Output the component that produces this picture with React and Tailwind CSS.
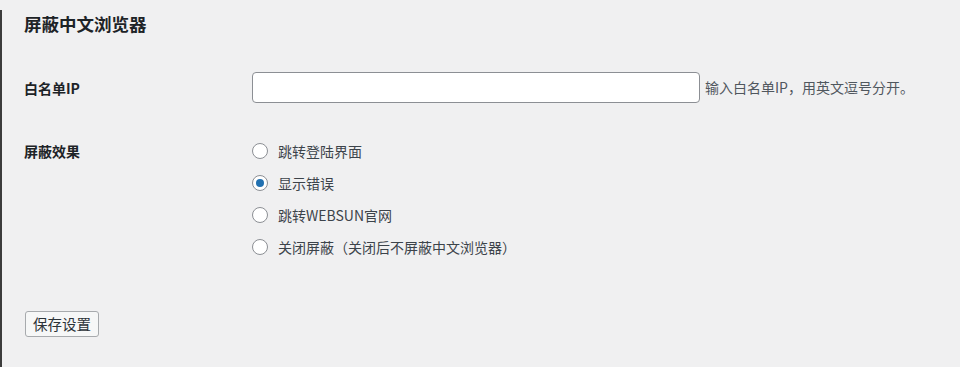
import { useState } from 'react';

const options = [
  { value: 'login', label: '跳转登陆界面' },
  { value: 'error', label: '显示错误' },
  { value: 'websun', label: '跳转WEBSUN官网' },
  { value: 'off', label: '关闭屏蔽（关闭后不屏蔽中文浏览器）' },
];

const font = { fontFamily: '"Noto Sans CJK SC", "Noto Sans", sans-serif' };

const App = () => {
  const [ip, setIp] = useState('');
  const [mode, setMode] = useState('error');

  return (
    <div className="h-[367px] w-[960px] overflow-hidden bg-[#f0f0f1]" style={font}>
      <div className="mt-[10px] h-[357px] border-l-2 border-[#3c3c3c] pl-[22px] text-[#1d2327]">
        <h2 className="pt-[2px] text-[17.5px] font-semibold leading-[24px]">屏蔽中文浏览器</h2>

        {/* 白名单 */}
        <div className="mt-[36px] flex items-center">
          <label className="w-[228px] text-[14px] font-semibold leading-[20px]">白名单IP</label>
          <input
            type="text"
            value={ip}
            onChange={(e) => setIp(e.target.value)}
            className="h-[31px] w-[448px] rounded-[4px] border border-[#8c8f94] bg-white px-2 text-[14px] focus:outline-none"
          />
          <span className="ml-[5px] text-[14px] text-[#50575e]">输入白名单IP，用英文逗号分开。</span>
        </div>

        {/* 屏蔽效果 */}
        <div className="mt-[32px] flex">
          <div className="flex h-8 w-[228px] items-center text-[14px] font-semibold leading-[20px]">屏蔽效果</div>
          <div className="flex flex-col">
            {options.map((o) => (
              <label key={o.value} className="flex h-8 cursor-pointer items-center text-[14px] text-[#3c434a]">
                <span
                  onClick={() => setMode(o.value)}
                  className="flex h-4 w-4 items-center justify-center rounded-full border border-[#8c8f94] bg-white"
                >
                  {mode === o.value && <span className="h-2 w-2 rounded-full bg-[#2271b1]" />}
                </span>
                <span className="ml-[10px]" onClick={() => setMode(o.value)}>{o.label}</span>
              </label>
            ))}
          </div>
        </div>

        <button className="ml-[1px] mt-[48px] h-[26px] rounded-[3px] border border-[#a7aaad] bg-[#f6f7f7] px-[7px] text-[14.5px] leading-[20px] text-[#2c3338]">
          保存设置
        </button>
      </div>
    </div>
  );
};

export default App;
